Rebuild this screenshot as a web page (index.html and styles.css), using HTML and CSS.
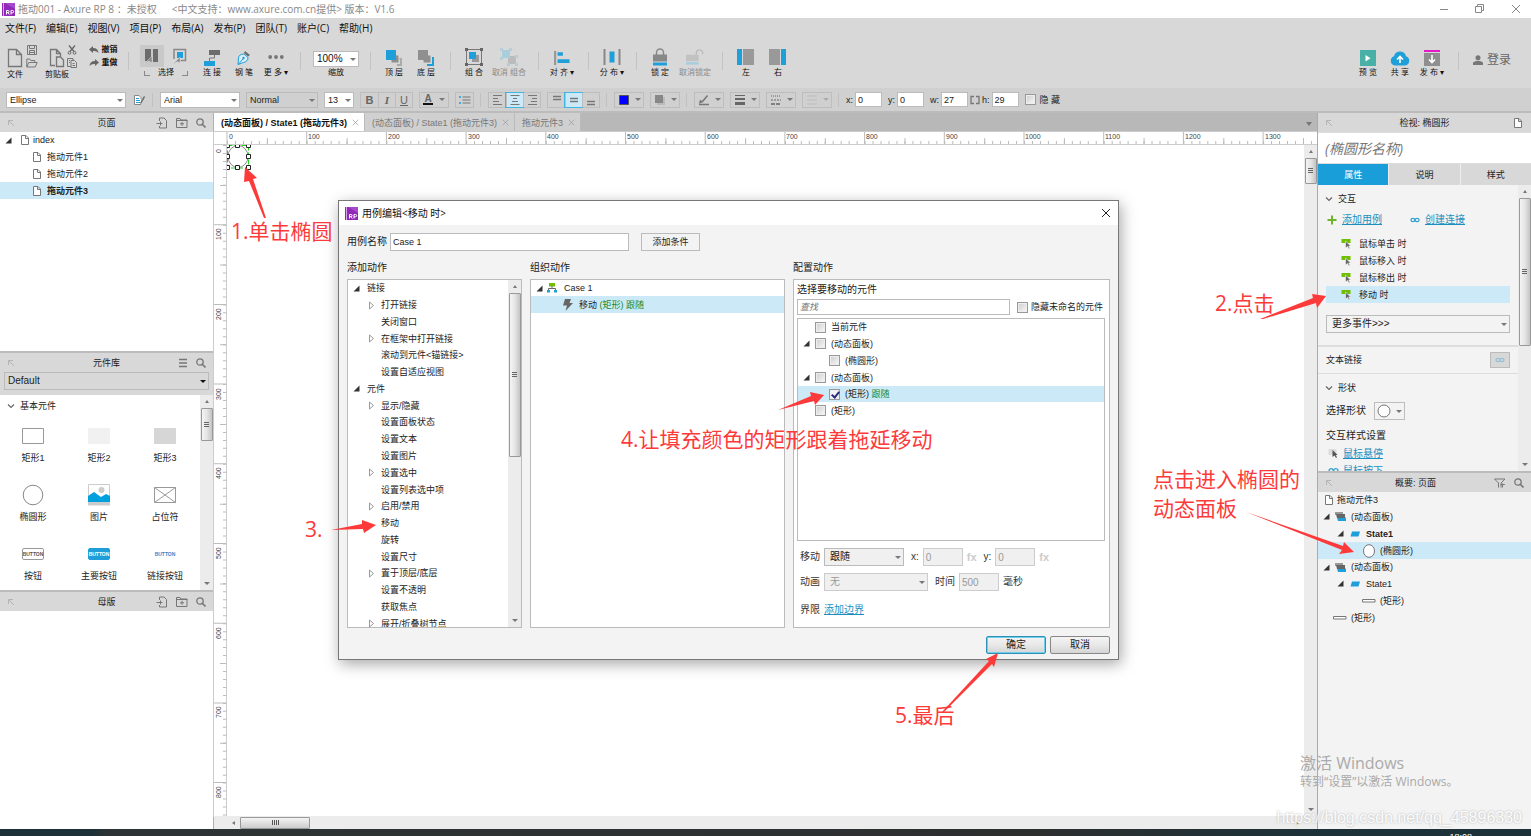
FILE: index.html
```html
<!DOCTYPE html>
<html lang="zh-CN">
<head>
<meta charset="utf-8">
<title>拖动001 - Axure RP 8</title>
<link rel="stylesheet" href="styles.css">
</head>
<body>
<svg class="defs" aria-hidden="true">
  <symbol id="rp" viewBox="0 0 13 13"><rect width="13" height="13" fill="#9228b8"/><rect x="1" width="1" height="13" fill="#d9a6ea"/><path d="M3 0h10v6z" fill="#a548cc"/><path d="M4.500 11.500v-4h1.500a1 1 0 0 1 0 2.200h-1.500m1.500 0l1.300 1.800M9 11.500v-4h1.500a1.100 1.100 0 0 1 0 2.300h-1.500" fill="none" stroke="#fff"/></symbol>
  <symbol id="doc" viewBox="0 0 10 12"><path d="M1.500 1.500h4.500l2.500 2.500v6.500h-7zM5.500 1.500v3h3" fill="#fff" stroke="#777"/></symbol>
  <symbol id="file" viewBox="0 0 16 20"><path d="M1.500 1.500h8l5 5v12h-13zM9.500 1.500v5h5" fill="none" stroke="#777" stroke-width="1.300"/></symbol>
  <symbol id="save" viewBox="0 0 10 10"><path d="M.5.5h9v9h-9zM2.500.5v3h5v-3M2.500 9.500v-4h5v4M3 7.500h4" fill="none" stroke="#777"/></symbol>
  <symbol id="open" viewBox="0 0 12 10"><path d="M.8 9v-8h3l1 1.500h4v2M.8 9l2-4.500h8.400l-2 4.500z" fill="none" stroke="#777"/></symbol>
  <symbol id="paste" viewBox="0 0 16 20"><path d="M6 17.500h-4.500v-16h6l4 4v3M7.500 1.500v4h4M7.500 9h4l3 3v6.500h-7z" fill="none" stroke="#777" stroke-width="1.300"/></symbol>
  <symbol id="cut" viewBox="0 0 10 10"><path d="M2 .5l5 6M8 .5l-5 6" stroke="#666" stroke-width="1.300"/><circle cx="2.500" cy="7.800" r="1.400" fill="none" stroke="#666"/><circle cx="7.500" cy="7.800" r="1.400" fill="none" stroke="#666"/></symbol>
  <symbol id="copy" viewBox="0 0 10 10"><path d="M4 8.500h-3.500v-8h5.500v2M4 2.500h3.500l2 2v5h-5.500zM5.500 5.500h2M5.500 7.500h2.500M2 2.500h1M2 4.500h1" fill="none" stroke="#777"/></symbol>
  <symbol id="undo" viewBox="0 0 10 8"><path d="M0 3.500l4-3.500v2q5 0 5.500 5-2-2.500-5.500-2v2z" fill="#666"/></symbol>
  <symbol id="redo" viewBox="0 0 10 8"><path d="M10 3.500l-4-3.500v2q-5 0-5.500 5 2-2.500 5.500-2v2z" fill="#666"/></symbol>
  <symbol id="selA" viewBox="0 0 16 16"><path d="M1 1h6v10l-2 2h-4zM9 1h5v13h-5z" fill="#6c6c6c"/><path d="M0 16l8-8v7l-3-2z" fill="#888" stroke="#ddd" stroke-width=".5"/></symbol>
  <symbol id="selB" viewBox="0 0 16 16"><path d="M2 11v-9.500h11.500v11h-5" fill="none" stroke="#888" stroke-width="1.500"/><rect x="5" y="4" width="6" height="6" fill="#1e9fda"/><path d="M1 16l7-7v6l-2.500-1.500z" fill="#888" stroke="#ddd" stroke-width=".5"/></symbol>
  <symbol id="connect" viewBox="0 0 16 16"><path d="M5 0h11v5h-11z" fill="#6c6c6c"/><path d="M0 11h11v5h-11z" fill="#1e9fda"/><path d="M10.500 5v3h-5v3" fill="none" stroke="#777"/></symbol>
  <symbol id="pen" viewBox="0 0 14 16"><path d="M8 1l5 4-2 1.500-4-3.500z" fill="#6c6c6c"/><path d="M7 4q-5 0-5.500 4l-.5 6.500 5.500-2q4.500-1 4.500-5z" fill="#d9edf6" stroke="#1e9fda"/><path d="M1.500 14l4.500-5" stroke="#1e9fda"/><circle cx="6.500" cy="8" r="1.200" fill="#1e9fda"/></symbol>
  <symbol id="dots" viewBox="0 0 16 16"><circle cx="2.200" cy="7" r="1.900" fill="#777"/><circle cx="8" cy="7" r="1.900" fill="#777"/><circle cx="13.800" cy="7" r="1.900" fill="#777"/></symbol>
  <symbol id="front" viewBox="0 0 16 16"><path d="M8 8h8v8h-5v-2h3v-4z" fill="#aaa"/><path d="M5 5h8v8h-8z" fill="#8f8f8f" stroke="#d8d8d8"/><path d="M0 0h10v10h-10z" fill="#1e9fda"/></symbol>
  <symbol id="back" viewBox="0 0 16 16"><path d="M9 14v2h7v-9h-2v7z" fill="#1e9fda"/><path d="M5 5h8v8h-8z" fill="#8f8f8f" stroke="#d8d8d8"/><path d="M0 0h10v10h-10z" fill="#8f8f8f"/></symbol>
  <symbol id="group" viewBox="0 0 18 18"><rect x="7" y="7" width="7" height="7" fill="#999"/><rect x="4" y="4" width="7" height="7" fill="#1e9fda"/><rect x="1.500" y="1.500" width="15" height="15" fill="none" stroke="#777"/><path d="M0 0h3v3h-3zM15 0h3v3h-3zM0 15h3v3h-3zM15 15h3v3h-3z" fill="#666"/></symbol>
  <symbol id="ungroup" viewBox="0 0 18 18"><path d="M8 8h8v8h-8z" fill="#bbb"/><path d="M2 2h8v8h-8z" fill="#a8cede"/><path d="M0 0h3v3h-3zM9 0h3v3h-3zM0 9h3v3h-3zM7 15h3v3h-3zM15 7h3v3h-3zM15 15h3v3h-3z" fill="#b6ccd6"/></symbol>
  <symbol id="alignL" viewBox="0 0 18 16"><path d="M0 0h2.500v16h-2.500z" fill="#999"/><path d="M4 1.500h6v4h-6zM4 9.500h13.500v4h-13.500z" fill="#1e9fda"/></symbol>
  <symbol id="distrib" viewBox="0 0 18 16"><path d="M.5 0h2v16h-2zM15.500 0h2v16h-2z" fill="#888"/><path d="M6.500 2.500h5v11h-5z" fill="#1e9fda"/></symbol>
  <symbol id="lock" viewBox="0 0 16 18"><path d="M4.500 7v-2.500a3.500 3.500 0 0 1 7 0v2.500" fill="none" stroke="#888" stroke-width="1.500"/><path d="M1 6.500h14v7h-14z" fill="#888"/><path d="M1 14.500h14v3h-14z" fill="#1e9fda"/></symbol>
  <symbol id="unlock" viewBox="0 0 20 18"><path d="M11.500 7v-2.500a3.500 3.500 0 0 1 7 0v1.500" fill="none" stroke="#bbb" stroke-width="1.500"/><path d="M0 6.500h14v7h-14z" fill="#c2c2c2"/><path d="M0 14.500h14v3h-14z" fill="#a8cede"/></symbol>
  <symbol id="paneL" viewBox="0 0 18 16"><path d="M0 0h5v16h-5z" fill="#1e9fda"/><path d="M6 0h11v16h-11z" fill="#999"/></symbol>
  <symbol id="paneR" viewBox="0 0 18 16"><path d="M12 0h5v16h-5z" fill="#1e9fda"/><path d="M0 0h11v16h-11z" fill="#999"/></symbol>
  <symbol id="preview" viewBox="0 0 16 16"><path d="M0 0h16v16h-16z" fill="#48b0a6"/><path d="M5.500 5l5 3.200-5 3.200z" fill="#fff"/></symbol>
  <symbol id="cloud" viewBox="0 0 20 16"><path d="M5 15.500a4.800 4.800 0 0 1-1-9.300 6.200 6.200 0 0 1 12 0 4.800 4.800 0 0 1-1 9.300z" fill="#1e9fda"/><path d="M10 13v-6M7 9.500l3-3 3 3" fill="none" stroke="#fff" stroke-width="1.600"/></symbol>
  <symbol id="publish" viewBox="0 0 16 16"><path d="M0 0h16v2h-16z" fill="#e619c8"/><path d="M0 3h16v13h-16z" fill="#8f8f8f"/><path d="M8 5v7M5 9.500l3 3 3-3" fill="none" stroke="#fff" stroke-width="1.600"/></symbol>
  <symbol id="user" viewBox="0 0 10 10"><circle cx="5" cy="2.800" r="2.500" fill="#777"/><path d="M0 10v-2.500q2-1.700 5-1.700t5 1.700v2.500z" fill="#777"/></symbol>
  <symbol id="search" viewBox="0 0 10 10"><circle cx="4" cy="4" r="3.200" fill="none" stroke="#777" stroke-width="1.300"/><path d="M6.500 6.500l3 3" stroke="#777" stroke-width="1.600"/></symbol>
  <symbol id="addPage" viewBox="0 0 11 12"><path d="M3 4v-3h4.500l2.500 2.500v7.500h-7v-2M0 6.500h6M4 4.500v4" fill="none" stroke="#777"/></symbol>
  <symbol id="addDir" viewBox="0 0 12 12"><path d="M.5 10.500v-9h3.500l1 1.500h6v7.500zM.5 3.500h11M4 6.800h4M6 4.800v4" fill="none" stroke="#777"/></symbol>
  <symbol id="burger" viewBox="0 0 10 10"><path d="M1 1.500h8M1 5h8M1 8.500h8" stroke="#777" stroke-width="1.300"/></symbol>
  <symbol id="pin" viewBox="0 0 8 8"><path d="M1.500 6v-4.500h4.500M2 2l5 5" fill="none" stroke="#b4b4b4"/></symbol>
  <symbol id="filter" viewBox="0 0 12 10"><path d="M.5 1h10.500l-4 4v4.500M4.500 9.500v-4.500l-4-4M8.500 5.500v4M6.800 6.500h4" fill="none" stroke="#777"/></symbol>
  <symbol id="chev" viewBox="0 0 8 8"><path d="M1 2.500l3 3 3-3" fill="none" stroke="#666" stroke-width="1.200"/></symbol>
  <symbol id="tri" viewBox="0 0 7 7"><path d="M6.500.5v6h-6z" fill="#333"/></symbol>
  <symbol id="triR" viewBox="0 0 7 9"><path d="M1.500 1l4 3.500-4 3.500z" fill="#fff" stroke="#999"/></symbol>
  <symbol id="event" viewBox="0 0 10 11"><path d="M0 1h9v4h-9z" fill="#6fbf00"/><path d="M4 3v7l2-1.500 1.500 2.500 1-.7-1.300-2.300h2z" fill="#666" stroke="#f3f3f3" stroke-width=".6"/></symbol>
  <symbol id="hover" viewBox="0 0 10 11"><path d="M0 1h8v6h-8z" fill="#ddd"/><path d="M4 2v7l2-1.500 1.500 2.500 1-.7-1.300-2.300h2z" fill="#555"/></symbol>
  <symbol id="plus" viewBox="0 0 10 10"><path d="M5 .5v9M.5 5h9" stroke="#6fb52a" stroke-width="2"/></symbol>
  <symbol id="chain" viewBox="0 0 10 6"><path d="M4.800 3a1.900 1.700 0 1 0-3.800 0 1.900 1.700 0 0 0 3.800 0zM9 3a1.900 1.700 0 1 0-3.800 0 1.900 1.700 0 0 0 3.800 0z" fill="none" stroke="#38a3cf" stroke-width="1.300"/></symbol>
  <symbol id="case" viewBox="0 0 10 10"><path d="M2 0h6v3.500h-6z" fill="#6fbf00"/><path d="M5 3v3M1.500 8v-2.500h7v2.500" fill="none" stroke="#666"/><path d="M0 7h3v2.500h-3zM7 7h3v2.500h-3z" fill="#1e9fda"/></symbol>
  <symbol id="bolt" viewBox="0 0 10 12"><path d="M2 0h6l-1.500 4h3.500l-7.500 8 1.500-5.500h-4z" fill="#666"/></symbol>
  <symbol id="panel" viewBox="0 0 11 10"><path d="M0 .5h8v3h-8z" fill="#999"/><path d="M2 6h9v3.500h-8z" fill="#1e9fda"/><path d="M1 2.500h9v4h-8z" fill="#666"/></symbol>
  <symbol id="state" viewBox="0 0 10 6"><path d="M2 .5h8l-1.500 5h-8z" fill="#1e9fda"/></symbol>
  <symbol id="bar" viewBox="0 0 14 4"><path d="M.5.5h12.500v2.500h-12.500z" fill="#fff" stroke="#777"/></symbol>
  <symbol id="close" viewBox="0 0 10 10"><path d="M1 1l8 8M9 1l-8 8" stroke="currentColor" fill="none"/></symbol>
</svg>

<header class="titlebar">
  <svg class="i13"><use href="#rp"/></svg>
  <h1>拖动001 - Axure RP 8 ：未授权</h1>
  <span class="edition">&lt;中文支持：www.axure.com.cn提供&gt; 版本：V1.6</span>
  <div class="winbtns">
    <button aria-label="最小化"><svg class="i10"><path d="M1 5.500h8" stroke="#888"/></svg></button>
    <button aria-label="还原"><svg class="i10"><path d="M.5 2.500h6v6h-6zM2.500 2v-1.500h6v6h-2" fill="none" stroke="#888"/></svg></button>
    <button aria-label="关闭"><svg class="i10"><use href="#close"/></svg></button>
  </div>
</header>

<nav class="menubar">
  <button>文件(F)</button><button>编辑(E)</button><button>视图(V)</button><button>项目(P)</button><button>布局(A)</button><button>发布(P)</button><button>团队(T)</button><button>账户(C)</button><button>帮助(H)</button>
</nav>

<div class="toolbar">
  <div class="cluster">
    <button class="tool narrow"><svg class="i20"><use href="#file"/></svg>文件</button>
    <div class="stack"><button aria-label="保存"><svg class="i10"><use href="#save"/></svg></button><button aria-label="打开"><svg class="i12"><use href="#open"/></svg></button></div>
  </div>
  <div class="cluster">
    <button class="tool narrow clip"><svg class="i20"><use href="#paste"/></svg>剪贴板</button>
    <div class="stack"><button aria-label="剪切"><svg class="i10"><use href="#cut"/></svg></button><button aria-label="复制"><svg class="i10"><use href="#copy"/></svg></button></div>
  </div>
  <div class="stack history"><button><svg class="i10"><use href="#undo"/></svg>撤销</button><button><svg class="i10"><use href="#redo"/></svg>重做</button></div>
  <span class="sep wide"></span>
  <div class="selmode">
    <div class="modes"><button class="on" aria-label="相交选择"><svg class="i16"><use href="#selA"/></svg></button><button aria-label="包含选择"><svg class="i16"><use href="#selB"/></svg></button></div>
    <div class="modelabel"><i class="lb"></i>选择<i class="rb"></i></div>
  </div>
  <button class="tool"><svg class="i16"><use href="#connect"/></svg>连 接</button>
  <button class="tool"><svg class="i16"><use href="#pen"/></svg>钢 笔</button>
  <button class="tool"><svg class="i16"><use href="#dots"/></svg>更 多 ▾</button>
  <span class="sep"></span>
  <div class="zoom"><span class="pick"><select id="zoom" class="white big"><option>100%</option></select></span><label for="zoom">缩放</label></div>
  <span class="sep wide"></span>
  <button class="tool"><svg class="i16"><use href="#front"/></svg>顶 层</button>
  <button class="tool"><svg class="i16"><use href="#back"/></svg>底 层</button>
  <span class="sep"></span>
  <button class="tool"><svg class="i18"><use href="#group"/></svg>组 合</button>
  <button class="tool off broad"><svg class="i18"><use href="#ungroup"/></svg>取消 组合</button>
  <span class="sep wide"></span>
  <button class="tool"><svg class="i16"><use href="#alignL"/></svg>对 齐 ▾</button>
  <span class="sep wide"></span>
  <button class="tool"><svg class="i18"><use href="#distrib"/></svg>分 布 ▾</button>
  <span class="sep"></span>
  <button class="tool"><svg class="i18"><use href="#lock"/></svg>锁 定</button>
  <button class="tool off broad"><svg class="i18"><use href="#unlock"/></svg>取消锁定</button>
  <span class="sep"></span>
  <button class="tool"><svg class="i18"><use href="#paneL"/></svg>左</button>
  <button class="tool"><svg class="i18"><use href="#paneR"/></svg>右</button>
  <div class="share">
    <button class="tool"><svg class="i16"><use href="#preview"/></svg>预 览</button>
    <button class="tool"><svg class="i20 flat"><use href="#cloud"/></svg>共 享</button>
    <button class="tool"><svg class="i16"><use href="#publish"/></svg>发 布 ▾</button>
    <span class="sep wide"></span>
    <button class="login"><svg class="i10"><use href="#user"/></svg>登录</button>
  </div>
</div>

<div class="format">
  <span class="pick w120"><select class="white" aria-label="部件样式"><option>Ellipse</option></select></span>
  <button class="edit" aria-label="编辑样式"><svg class="i12" viewBox="0 0 12 12"><path d="M8 10.500h-6.500v-9h4.500l2 2v2" fill="#fff" stroke="#888"/><path d="M3 4.500h3M3 6.500h4M3 8.500h4" stroke="#1e9fda"/><path d="M11.500 2.500l-4 7" stroke="#666" stroke-width="1.500"/></svg></button>
  <span class="sep"></span>
  <span class="pick w80"><select class="white" aria-label="字体"><option>Arial</option></select></span>
  <span class="pick w72"><select aria-label="字重"><option>Normal</option></select></span>
  <span class="pick w30"><select class="white" aria-label="字号"><option>13</option></select></span>
  <div class="seg"><button><b>B</b></button><button><i class="serif">I</i></button><button><u>U</u></button></div>
  <button class="drop"><b class="fc">A</b></button>
  <div class="seg"><button aria-label="项目符号"><svg class="i12" viewBox="0 0 12 12"><path d="M3.500 3h8M3.500 6h8M3.500 9h8" stroke="#777"/><path d="M0 3h2M0 9h2" stroke="#1e9fda" stroke-width="1.500"/></svg></button></div>
  <span class="sep"></span>
  <div class="seg">
    <button aria-label="左对齐"><svg class="i12" viewBox="0 0 12 12"><path d="M1 1.500h9M1 4.500h5M1 7.500h6M1 10.500h9" stroke="#777" stroke-width="1.200"/></svg></button>
    <button class="on" aria-label="居中"><svg class="i12" viewBox="0 0 12 12"><path d="M1.500 1.500h9M4 4.500h4M3 7.500h6M1.500 10.500h9" stroke="#777" stroke-width="1.200"/></svg></button>
    <button aria-label="右对齐"><svg class="i12" viewBox="0 0 12 12"><path d="M2 1.500h9M6 4.500h5M5 7.500h6M2 10.500h9" stroke="#777" stroke-width="1.200"/></svg></button>
  </div>
  <div class="seg">
    <button aria-label="顶部对齐"><svg class="i12" viewBox="0 0 12 12"><path d="M2 2.500h8M2 5.500h8" stroke="#777" stroke-width="1.300"/></svg></button>
    <button class="on" aria-label="中部对齐"><svg class="i12" viewBox="0 0 12 12"><path d="M2 4.500h8M2 7.500h8" stroke="#777" stroke-width="1.300"/></svg></button>
    <button aria-label="底部对齐"><svg class="i12" viewBox="0 0 12 12"><path d="M2 7.500h8M2 10.500h8" stroke="#777" stroke-width="1.300"/></svg></button>
  </div>
  <span class="sep"></span>
  <button class="drop" aria-label="填充颜色"><svg class="i12" viewBox="0 0 12 12"><path d="M1.500 1.500h9v9h-9z" fill="#00f" stroke="#555"/></svg></button>
  <button class="drop" aria-label="阴影"><svg class="i12" viewBox="0 0 12 12"><path d="M3 3h8v8h-8z" fill="#bbb"/><path d="M1 1h8v8h-8z" fill="#888"/></svg></button>
  <span class="sep"></span>
  <button class="drop" aria-label="线条颜色"><svg class="i12" viewBox="0 0 12 12"><path d="M1 10.500h10" stroke="#777" stroke-width="1.500"/><path d="M9.500 1.500l-5 6-2.500 1 .8-2.500" fill="none" stroke="#777" stroke-width="1.500"/></svg></button>
  <button class="drop" aria-label="线宽"><svg class="i12" viewBox="0 0 12 12"><path d="M1 1.500h10" stroke="#666"/><path d="M1 5h10" stroke="#666" stroke-width="2"/><path d="M1 9.500h10" stroke="#666" stroke-width="3"/></svg></button>
  <button class="drop" aria-label="线型"><svg class="i12" viewBox="0 0 12 12"><path d="M1 2h10" stroke="#666" stroke-dasharray="1 1"/><path d="M1 6h10" stroke="#666" stroke-dasharray="2 1"/><path d="M1 10h10" stroke="#666" stroke-dasharray="4 1" stroke-width="1.500"/></svg></button>
  <button class="drop dim" aria-label="箭头" disabled><svg class="i12" viewBox="0 0 12 12"><path d="M1 2h10M1 6h10M1 10h10" stroke="#bbb"/></svg></button>
  <span class="sep"></span>
  <label class="coord">x:<input type="text" value="0"></label>
  <label class="coord">y:<input type="text" value="0"></label>
  <label class="coord">w:<input type="text" value="27"></label>
  <label class="coord tied"><svg class="i10" viewBox="0 0 10 10"><path d="M4 1.500h-3v7h3M6 1.500h3v7h-3" fill="none" stroke="#777" stroke-width="1.300"/></svg>h:<input type="text" value="29"></label>
  <label class="check"><input type="checkbox">隐 藏</label>
</div>

<main class="work">
  <aside class="left">
    <section class="pages">
      <header class="phead"><svg class="i8"><use href="#pin"/></svg><h2>页面</h2><button aria-label="新增页面"><svg class="i12"><use href="#addPage"/></svg></button><button aria-label="新增文件夹"><svg class="i12"><use href="#addDir"/></svg></button><button aria-label="搜索"><svg class="i10"><use href="#search"/></svg></button></header>
      <ul class="tree">
        <li><svg class="i7"><use href="#tri"/></svg><svg class="i12"><use href="#doc"/></svg>index</li>
        <li class="sub"><svg class="i12"><use href="#doc"/></svg>拖动元件1</li>
        <li class="sub"><svg class="i12"><use href="#doc"/></svg>拖动元件2</li>
        <li class="sub sel"><svg class="i12"><use href="#doc"/></svg><b>拖动元件3</b></li>
      </ul>
    </section>
    <section class="library">
      <header class="phead"><svg class="i8"><use href="#pin"/></svg><h2>元件库</h2><button aria-label="菜单"><svg class="i10"><use href="#burger"/></svg></button><button aria-label="搜索"><svg class="i10"><use href="#search"/></svg></button></header>
      <div class="libpick"><span class="pick dark"><select class="big" aria-label="元件库"><option>Default</option></select></span></div>
      <div class="libbody">
        <div class="libmain">
          <h3><svg class="i8"><use href="#chev"/></svg>基本元件</h3>
          <div class="widgets">
            <figure><svg class="i24" viewBox="0 0 24 24"><path d="M1.500 4.500h21v15h-21z" fill="#fff" stroke="#999"/></svg><figcaption>矩形1</figcaption></figure>
            <figure><svg class="i24" viewBox="0 0 24 24"><path d="M1 4h22v16h-22z" fill="#f1f1f1"/></svg><figcaption>矩形2</figcaption></figure>
            <figure><svg class="i24" viewBox="0 0 24 24"><path d="M1 4h22v16h-22z" fill="#d6d6d6"/></svg><figcaption>矩形3</figcaption></figure>
            <figure><svg class="i24" viewBox="0 0 24 24"><circle cx="12" cy="12" r="9.800" fill="#fff" stroke="#888"/></svg><figcaption>椭圆形</figcaption></figure>
            <figure><svg class="i24" viewBox="0 0 24 24"><path d="M1.500 1.500h21v20h-21z" fill="#fff" stroke="#ccc"/><circle cx="14.500" cy="7" r="3" fill="#ccc"/><path d="M1 19v-6l6-4 7 5 5-3 4 2v6z" fill="#00a0df"/><path d="M1 19h22v3.500h-22z" fill="#ccc"/></svg><figcaption>图片</figcaption></figure>
            <figure><svg class="i24" viewBox="0 0 24 24"><path d="M1.500 4.500h21v15h-21zl21 15M22.500 4.500l-21 15" fill="#fff" stroke="#999"/></svg><figcaption>占位符</figcaption></figure>
            <figure><span class="wbtn">BUTTON</span><figcaption>按钮</figcaption></figure>
            <figure><span class="wbtn primary">BUTTON</span><figcaption>主要按钮</figcaption></figure>
            <figure><span class="wbtn link">BUTTON</span><figcaption>链接按钮</figcaption></figure>
          </div>
        </div>
        <div class="vscroll"><i class="up"></i><i class="thumb short"></i><i class="down"></i></div>
      </div>
    </section>
    <section class="masters">
      <header class="phead"><svg class="i8"><use href="#pin"/></svg><h2>母版</h2><button aria-label="新增母版"><svg class="i12"><use href="#addPage"/></svg></button><button aria-label="新增文件夹"><svg class="i12"><use href="#addDir"/></svg></button><button aria-label="搜索"><svg class="i10"><use href="#search"/></svg></button></header>
    </section>
  </aside>

  <section class="center">
    <div class="tabs">
      <button class="tab on">(动态面板) / State1 (拖动元件3)<svg class="i7" viewBox="0 0 10 10"><use href="#close"/></svg></button>
      <button class="tab">(动态面板) / State1 (拖动元件3)<svg class="i7" viewBox="0 0 10 10"><use href="#close"/></svg></button>
      <button class="tab">拖动元件3<svg class="i7" viewBox="0 0 10 10"><use href="#close"/></svg></button>
      <i class="tabmenu"></i>
    </div>
    <svg class="hruler">
      <g stroke="#bbb"><path d="M13 10.500h2000" stroke-width="3" stroke-dasharray="1 6.970"/><path d="M52.900 9h2000" stroke-width="6" stroke-dasharray="1 78.700"/><path d="M12.500 6h2000" stroke-width="12" stroke-dasharray="1 78.700"/></g>
      <g class="ticks"><text x="15" y="7">0</text><text x="94" y="7">100</text><text x="174" y="7">200</text><text x="254" y="7">300</text><text x="333" y="7">400</text><text x="413" y="7">500</text><text x="493" y="7">600</text><text x="572" y="7">700</text><text x="652" y="7">800</text><text x="732" y="7">900</text><text x="811" y="7">1000</text><text x="891" y="7">1100</text><text x="971" y="7">1200</text><text x="1051" y="7">1300</text></g>
    </svg>
    <div class="stage">
      <svg class="vruler">
        <g stroke="#bbb"><path d="M10.500 0v2000" stroke-width="3" stroke-dasharray="1 6.970"/><path d="M9 39.900v2000" stroke-width="6" stroke-dasharray="1 78.700"/><path d="M6 79.200v2000" stroke-width="12" stroke-dasharray="1 78.700"/></g>
        <g class="ticks"><text transform="translate(7 8) rotate(-90)">0</text><text transform="translate(7 95) rotate(-90)">100</text><text transform="translate(7 175) rotate(-90)">200</text><text transform="translate(7 255) rotate(-90)">300</text><text transform="translate(7 334) rotate(-90)">400</text><text transform="translate(7 414) rotate(-90)">500</text><text transform="translate(7 494) rotate(-90)">600</text><text transform="translate(7 573) rotate(-90)">700</text><text transform="translate(7 653) rotate(-90)">800</text></g>
      </svg>
      <div class="canvas">
        <svg class="shape" viewBox="0 0 24 26"><path d="M.5.500h21v22.500h-21z" fill="none" stroke="#1fd01f" stroke-dasharray="5 2"/><ellipse cx="11" cy="11.500" rx="10" ry="11" fill="#fff" stroke="#888"/><g fill="#fff" stroke="#222"><path d="M-1.500-1.500h4v4h-4zM8.500-1.500h4v4h-4zM19.500-1.500h4v4h-4zM-1.500 9.500h4v4h-4zM19.500 9.500h4v4h-4zM-1.500 20.500h4v4h-4zM8.500 20.500h4v4h-4zM19.500 20.500h4v4h-4z"/></g></svg>
      </div>
      <div class="vscroll"><i class="up"></i><i class="thumb tiny"></i><i class="down"></i></div>
    </div>
    <div class="hscroll"><i class="larr"></i><i class="thumb"></i><i class="rarr"></i></div>
  </section>

  <aside class="right">
    <section class="inspector">
      <header class="phead"><svg class="i8"><use href="#pin"/></svg><h2>检视: 椭圆形</h2><button aria-label="页面属性"><svg class="i12"><use href="#doc"/></svg></button></header>
      <input class="wname" type="text" placeholder="(椭圆形名称)" aria-label="椭圆形名称">
      <div class="itabs"><button class="on">属性</button><button>说明</button><button>样式</button></div>
      <div class="ibody">
        <div class="iscroll">
          <h3><svg class="i8"><use href="#chev"/></svg>交互</h3>
          <div class="ilinks"><svg class="i10"><use href="#plus"/></svg><a href="#">添加用例</a><svg class="i10 gapl"><use href="#chain"/></svg><a href="#">创建连接</a></div>
          <ul class="events">
            <li><svg class="i11"><use href="#event"/></svg>鼠标单击 时</li>
            <li><svg class="i11"><use href="#event"/></svg>鼠标移入 时</li>
            <li><svg class="i11"><use href="#event"/></svg>鼠标移出 时</li>
            <li class="sel"><svg class="i11"><use href="#event"/></svg>移动 时</li>
          </ul>
          <span class="pick more"><select class="mid" aria-label="更多事件"><option>更多事件&gt;&gt;&gt;</option></select></span>
          <div class="textlink">文本链接<button aria-label="文本链接"><svg class="i10"><use href="#chain"/></svg></button></div>
          <h3 class="shapehead"><svg class="i8"><use href="#chev"/></svg>形状</h3>
          <div class="pickshape">选择形状<button class="drop" aria-label="选择形状"><svg class="i14" viewBox="0 0 14 14"><circle cx="7" cy="7" r="6" fill="#fff" stroke="#777"/></svg></button></div>
          <h4>交互样式设置</h4>
          <div class="istyle"><svg class="i11"><use href="#hover"/></svg><a href="#">鼠标悬停</a></div>
          <div class="istyle"><svg class="i11"><use href="#chain"/></svg><a href="#">鼠标按下</a></div>
        </div>
        <div class="vscroll"><i class="up"></i><i class="thumb long"></i><i class="down"></i></div>
      </div>
    </section>
    <section class="outline">
      <header class="phead"><svg class="i8"><use href="#pin"/></svg><h2>概要: 页面</h2><button aria-label="筛选"><svg class="i12"><use href="#filter"/></svg></button><button aria-label="搜索"><svg class="i10"><use href="#search"/></svg></button></header>
      <ul class="tree">
        <li class="root"><svg class="i12"><use href="#doc"/></svg>拖动元件3</li>
        <li><svg class="i7"><use href="#tri"/></svg><svg class="i11"><use href="#panel"/></svg>(动态面板)</li>
        <li class="d1"><svg class="i7"><use href="#tri"/></svg><svg class="i10"><use href="#state"/></svg><b>State1</b></li>
        <li class="d2 sel"><svg class="i14" viewBox="0 0 14 14"><ellipse cx="7" cy="7" rx="5.500" ry="6.300" fill="#fff" stroke="#777"/></svg>(椭圆形)</li>
        <li><svg class="i7"><use href="#tri"/></svg><svg class="i11"><use href="#panel"/></svg>(动态面板)</li>
        <li class="d1"><svg class="i7"><use href="#tri"/></svg><svg class="i10"><use href="#state"/></svg>State1</li>
        <li class="d2"><svg class="i14"><use href="#bar"/></svg>(矩形)</li>
        <li class="d0"><svg class="i14"><use href="#bar"/></svg>(矩形)</li>
      </ul>
    </section>
  </aside>
</main>

<footer class="taskbar"><time>18:08</time></footer>

<div class="dialog" role="dialog" aria-labelledby="dlg">
  <header><svg class="i13"><use href="#rp"/></svg><h2 id="dlg">用例编辑&lt;移动 时&gt;</h2><button aria-label="关闭"><svg class="i10"><use href="#close"/></svg></button></header>
  <div class="caseform"><label for="cname">用例名称</label><input id="cname" type="text" value="Case 1"><button>添加条件</button></div>
  <div class="cols">
    <section>
      <h3>添加动作</h3>
      <div class="box split">
        <ul class="actions">
          <li class="cat"><svg class="i7"><use href="#tri"/></svg>链接</li>
          <li><svg class="i9"><use href="#triR"/></svg>打开链接</li>
          <li class="leaf">关闭窗口</li>
          <li><svg class="i9"><use href="#triR"/></svg>在框架中打开链接</li>
          <li class="leaf">滚动到元件&lt;锚链接&gt;</li>
          <li class="leaf">设置自适应视图</li>
          <li class="cat"><svg class="i7"><use href="#tri"/></svg>元件</li>
          <li><svg class="i9"><use href="#triR"/></svg>显示/隐藏</li>
          <li class="leaf">设置面板状态</li>
          <li class="leaf">设置文本</li>
          <li class="leaf">设置图片</li>
          <li><svg class="i9"><use href="#triR"/></svg>设置选中</li>
          <li class="leaf">设置列表选中项</li>
          <li><svg class="i9"><use href="#triR"/></svg>启用/禁用</li>
          <li class="leaf">移动</li>
          <li class="leaf">旋转</li>
          <li class="leaf">设置尺寸</li>
          <li><svg class="i9"><use href="#triR"/></svg>置于顶层/底层</li>
          <li class="leaf">设置不透明</li>
          <li class="leaf">获取焦点</li>
          <li><svg class="i9"><use href="#triR"/></svg>展开/折叠树节点</li>
        </ul>
        <div class="vscroll"><i class="up"></i><i class="thumb tall"></i><i class="down"></i></div>
      </div>
    </section>
    <section>
      <h3>组织动作</h3>
      <ul class="box tree cases">
        <li><svg class="i7"><use href="#tri"/></svg><svg class="i10"><use href="#case"/></svg>Case 1</li>
        <li class="sub sel"><svg class="i12"><use href="#bolt"/></svg><span>移动 <em>(矩形) 跟随</em></span></li>
      </ul>
    </section>
    <section>
      <h3>配置动作</h3>
      <div class="box config">
        <h4>选择要移动的元件</h4>
        <div class="find"><input type="text" placeholder="查找" aria-label="查找"><label class="check"><input type="checkbox">隐藏未命名的元件</label></div>
        <ul class="tree targets">
          <li class="c1"><label class="check"><input type="checkbox">当前元件</label></li>
          <li><svg class="i7"><use href="#tri"/></svg><label class="check"><input type="checkbox">(动态面板)</label></li>
          <li class="c2"><label class="check"><input type="checkbox">(椭圆形)</label></li>
          <li><svg class="i7"><use href="#tri"/></svg><label class="check"><input type="checkbox">(动态面板)</label></li>
          <li class="c2 sel"><label class="check"><input type="checkbox" checked><span>(矩形) <em>跟随</em></span></label></li>
          <li class="c1"><label class="check"><input type="checkbox">(矩形)</label></li>
        </ul>
        <div class="opt"><label for="mv">移动</label><span class="pick w80"><select id="mv" class="mid"><option>跟随</option></select></span><label for="mx" class="ax">x:</label><input id="mx" type="text" value="0" disabled><span class="fx">fx</span><label for="my" class="ax">y:</label><input id="my" type="text" value="0" disabled><span class="fx">fx</span></div>
        <div class="opt"><label for="an">动画</label><span class="pick w104"><select id="an" class="mid" disabled><option>无</option></select></span><label for="tm" class="tm">时间</label><input id="tm" type="text" value="500" disabled>毫秒</div>
        <div class="opt last"><span>界限</span><a href="#">添加边界</a></div>
      </div>
    </section>
  </div>
  <footer><button class="ok">确定</button><button>取消</button></footer>
</div>

<div class="notes">
  <svg><g fill="#fd3a3a"><path d="M245 167l12 11-4 1 13 39h-2l-15-37-5 1z"/><path d="M1326 296l-14-2 1 4-53 21h3l53-16 1 5z"/><path d="M376 525l-14-5v4l-31 6 32-1 1 4z"/><path d="M824 395l-14-3 1 4-33 14 36-9 1 4z"/><path d="M998 653l-12 6 3 2-47 51h2l48-48 2 3z"/><path d="M1354 552l-10-10-1 4-97-34 96 38-3 4z"/></g></svg>
  <p class="n1">1.单击椭圆</p>
  <p class="n2">2.点击</p>
  <p class="n3">3.</p>
  <p class="n4">4.让填充颜色的矩形跟着拖延移动</p>
  <p class="n5">5.最后</p>
  <p class="n6">点击进入椭圆的<br>动态面板</p>
  <p class="act">激活 Windows<small>转到“设置”以激活 Windows。</small></p>
  <p class="csdn">https://blog.csdn.net/qq_45896330</p>
</div>
</body>
</html>
```
FILE: styles.css
```css
* { box-sizing: border-box; margin: 0; padding: 0; }
html, body { height: 100%; }
body {
  display: flex; flex-direction: column; overflow: hidden; position: relative;
  background: #d8d8d8; color: #222;
  font: 9px/12px "Liberation Sans", "Noto Sans CJK SC", sans-serif;
}
h1, h2, h3, h4 { font-size: inherit; font-weight: normal; }
ul { list-style: none; }
button, input, select { font: inherit; color: inherit; border: 0; background: none; border-radius: 0; }
button { cursor: pointer; display: inline-flex; align-items: center; justify-content: center; white-space: nowrap; }
a { color: #1c8fc0; font-size: 10px; }
em { font-style: normal; color: #1a8a2a; }
svg { flex: none; overflow: visible; display: block; }
.defs { width: 0; height: 0; position: absolute; }
.i7 { width: 7px; height: 7px; }
.i8 { width: 8px; height: 8px; }
.i9 { width: 7px; height: 9px; }
.i10 { width: 10px; height: 10px; }
.i11 { width: 11px; height: 11px; }
.i12 { width: 12px; height: 12px; }
.i13 { width: 13px; height: 13px; }
.i14 { width: 14px; height: 14px; }
.i16 { width: 16px; height: 16px; }
.i18 { width: 18px; height: 18px; }
.i20 { width: 20px; height: 20px; }
.i24 { width: 24px; height: 24px; }

/* window chrome */
.titlebar { height: 18px; flex: none; display: flex; align-items: center; background: #fff; padding: 0 10px 0 2px; color: #888; font: 10px/18px "Open Sans", "Noto Sans CJK SC", sans-serif; white-space: nowrap; }
.titlebar h1 { margin-left: 3px; }
.edition { margin-left: 15px; }
.winbtns { margin-left: auto; display: flex; gap: 26px; }
.menubar { height: 20px; flex: none; display: flex; align-items: center; gap: 10px; padding-left: 5px; font: 10px/14px "Open Sans", "Noto Sans CJK SC", sans-serif; color: #111; }

/* toolbar */
.toolbar { height: 50px; flex: none; display: flex; align-items: flex-start; padding: 7px 4px 0; font-size: 8px; line-height: 10px; color: #111; }
.cluster { display: flex; margin-right: 10px; }
.tool { width: 32px; height: 33px; flex-direction: column; justify-content: flex-end; flex: none; }
.tool svg { margin-bottom: 2px; }
.tool .flat { height: 16px; }
.tool.narrow { width: 22px; height: 35px; }
.tool.clip { width: 18px; }
.tool.broad { width: 38px; }
.off { color: #888; }
.stack { display: flex; flex-direction: column; gap: 3px; }
.stack button { height: 10px; width: 12px; }
.history button { width: 30px; gap: 3px; font-weight: bold; }
.sep { width: 1px; height: 18px; background: #c2c2c2; margin: 7px 7px 0 8px; flex: none; }
.sep.wide { margin-left: 10px; }
.selmode { width: 60px; padding-left: 4px; }
.modes { display: flex; gap: 4px; }
.modes button { width: 24px; height: 22px; }
.modes .on { background: #c9c9c9; }
.modelabel { display: flex; justify-content: space-between; align-items: center; margin-top: 1px; width: 44px; margin-left: 4px; }
.modelabel i { width: 6px; height: 5px; border-bottom: 1px solid #888; }
.lb { border-left: 1px solid #888; }
.rb { border-right: 1px solid #888; }
.zoom { width: 46px; text-align: center; padding-top: 6px; margin: 0 1px 0 5px; }
.zoom .pick { height: 16px; margin-bottom: 1px; }
.zoom label { display: block; }
.share { margin-left: auto; display: flex; align-items: flex-start; padding-right: 16px; }
.login { gap: 4px; margin: 8px 0 0 7px; font-size: 12px; line-height: 14px; height: 14px; color: #666; }

/* drop-downs */
.pick { position: relative; display: flex; height: 16px; flex: none; }
.pick select { appearance: none; width: 100%; height: 100%; border: 1px solid #bbb; padding: 0 3px; line-height: 12px; }
.pick::after, .drop::after, .tabmenu::after { content: ""; border: 3px solid transparent; border-top-color: #777; border-bottom: 0; }
.pick::after { position: absolute; right: 3px; top: 50%; margin-top: -1px; pointer-events: none; }
.pick.dark::after { border-top-color: #111; }
.white { background: #fff; }
.pick .big, .pick .mid { font-size: 10px; }
.w120 { width: 120px; } .w80 { width: 80px; } .w72 { width: 72px; } .w30 { width: 30px; } .w104 { width: 104px; }

/* format bar */
.format { height: 25px; flex: none; display: flex; align-items: center; gap: 6px; padding: 0 6px; background: #d0d0d0; border-bottom: 2px solid #bcbcbc; }
.format .sep { margin: 0 1px 0 0; height: 14px; }
.edit { margin: 0 1px; }
.seg { display: flex; border: 1px solid #bdbdbd; height: 16px; }
.seg button { width: 17px; height: 14px; color: #666; font-size: 11px; }
.seg button + button { border-left: 1px solid #bdbdbd; }
.seg .on { background: #cbe9f7; outline: 1px solid #45b4e0; }
.serif { font-family: "Liberation Serif", serif; font-weight: bold; }
.drop { width: 30px; height: 16px; border: 1px solid #bdbdbd; justify-content: space-around; }
.drop.dim::after { border-top-color: #aaa; }
.fc { border-bottom: 2px solid #111; line-height: 9px; color: #666; width: 10px; font-size: 10px; }
.coord { display: flex; align-items: center; gap: 2px; }
.coord input { width: 27px; height: 15px; border: 1px solid #bbb; background: #fff; padding: 0 2px; }
.tied { margin-left: -4px; }
.check { display: flex; align-items: center; gap: 4px; white-space: nowrap; }
.check input { appearance: none; width: 11px; height: 11px; border: 1px solid #999; background: linear-gradient(135deg, #ccc, #fafafa); outline: 1px solid #eee; outline-offset: -2px; flex: none; }
.check input:checked { background: #f4f4f4; }
.check input:checked::before { content: ""; display: block; width: 3px; height: 6px; margin: 0 0 0 3px; border: solid #2b2b80; border-width: 0 2px 2px 0; transform: rotate(40deg); }

/* main work area */
.work { flex: 1; min-height: 0; display: grid; grid-template-columns: 214px minmax(0, 1fr) 214px; }
.left { display: flex; flex-direction: column; border-right: 1px solid #b0b0b0; min-height: 0; background: #fff; }
.phead { height: 19px; display: flex; align-items: center; gap: 8px; background: #d8d8d8; padding: 0 7px; flex: none; }
.phead h2 { flex: 1; text-align: center; }
.left .phead h2 { padding-left: 42px; }
.left .library .phead h2 { padding-left: 20px; }
.right .phead h2 { padding-left: 4px; }
.phead button { height: 12px; }
.pages { height: 238px; }
.tree li { height: 17px; display: flex; align-items: center; gap: 7px; padding-left: 5px; white-space: nowrap; }
.tree li:nth-child(4n+1) { height: 16px; }
.tree .sel, .events .sel { background: #cbe9f7; }
.pages .sub { padding-left: 31px; gap: 4px; }
.pages li svg + svg { margin-right: -5px; }
.library { border-top: 2px solid #bcbcbc; height: 239px; display: flex; flex-direction: column; }
.libpick { background: #d8d8d8; padding: 0 4px 5px; }
.pick.dark { height: 18px; }
.libbody { flex: 1; display: flex; min-height: 0; }
.libmain { flex: 1; }
.libmain h3 { display: flex; gap: 5px; align-items: center; height: 21px; padding-left: 7px; }
.widgets { display: grid; grid-template-columns: repeat(3, 66px); grid-auto-rows: 59px; }
.widgets figure { display: flex; flex-direction: column; align-items: center; padding-top: 8px; gap: 4px; }
.wbtn { width: 22px; height: 12px; margin: 6px 0; border: 1px solid #999; border-radius: 2px; font-size: 5px; line-height: 10px; font-weight: bold; text-align: center; color: #555; display: flex; justify-content: center; }
.primary { background: #1e9fda; border-color: #1e9fda; color: #fff; }
.link { border-color: transparent; color: #3a85c8; }
.masters { border-top: 2px solid #bcbcbc; flex: 1; }

/* scroll bars */
.vscroll { width: 13px; background: #ececec; display: flex; flex-direction: column; align-items: center; flex: none; padding: 5px 0; }
.vscroll .up { border: 2px solid transparent; border-bottom: 3px solid #777; border-top: 0; margin-bottom: 5px; }
.vscroll .down { border: 3px solid transparent; border-top: 3px solid #777; border-bottom: 0; margin-top: auto; }
.thumb { border: 1px solid #999; border-radius: 1px; display: flex; align-items: center; justify-content: center; background: linear-gradient(90deg, #f4f4f4, #e4e4e4 50%, #c4c4c4); }
.vscroll .thumb { width: 12px; }
.thumb::after { content: ""; width: 5px; height: 6px; background: repeating-linear-gradient(#666 0 1px, transparent 1px 2px); }
.short { height: 33px; } .tiny { height: 26px; } .long { height: 148px; } .tall { height: 164px; }
.hscroll { height: 13px; flex: none; display: flex; align-items: center; background: #ececec; padding: 0 18px; }
.hscroll .thumb { width: 70px; height: 12px; background: linear-gradient(#f4f4f4, #ccc); }
.hscroll .thumb::after { width: 7px; height: 5px; background: repeating-linear-gradient(90deg, #555 0 1px, transparent 1px 2px); }
.larr { border: 2px solid transparent; border-right: 3px solid #777; border-left: 0; margin-right: 5px; }
.rarr { border: 2px solid transparent; border-left: 3px solid #777; border-right: 0; margin-left: auto; }

/* canvas */
.center { display: flex; flex-direction: column; min-height: 0; min-width: 0; background: #fff; }
.tabs { height: 19px; flex: none; display: flex; background: #b8b8b8; }
.tab { padding: 0 5px 0 7px; gap: 5px; background: #d0d0d0; color: #777; border-right: 1px solid #bbb; }
.tab svg { color: #999; }
.tab.on { background: #fff; color: #111; font-weight: bold; }
.tabmenu { margin-left: auto; padding: 9px 5px 0; }
.tabmenu::after { display: block; border-top-width: 4px; }
.hruler { width: 100%; height: 12px; flex: none; overflow: hidden; outline: 1px solid #ccc; margin-bottom: 1px; }
.ticks { font-size: 7px; fill: #444; }
.stage { flex: 1; min-height: 0; display: flex; }
.vruler { width: 12px; height: 100%; overflow: hidden; outline: 1px solid #ccc; margin-right: 1px; }
.canvas { flex: 1; overflow: hidden; }
.shape { width: 24px; height: 26px; overflow: hidden; }

/* inspector */
.right { display: flex; flex-direction: column; border-left: 1px solid #aaa; background: #f3f3f3; min-height: 0; }
.inspector { height: 358px; display: flex; flex-direction: column; }
.wname { height: 31px; background: #fff; padding: 0 7px; flex: none; font: italic 14px/20px "Open Sans", "Noto Sans CJK SC", sans-serif; border-top: 1px solid #ddd; }
.wname::placeholder { color: #777; }
.itabs { display: grid; grid-template-columns: repeat(3, 1fr); gap: 1px; height: 22px; flex: none; background: #eee; border-top: 1px solid #ddd; }
.itabs button { background: #d8d8d8; }
.itabs .on { background: #1a9ed9; color: #fff; }
.ibody { flex: 1; min-height: 0; display: flex; overflow: hidden; }
.iscroll { flex: 1; padding: 6px 8px 0; overflow: hidden; }
.iscroll h3 { display: flex; gap: 5px; align-items: center; height: 16px; margin-left: -1px; }
.ilinks { display: flex; align-items: center; gap: 5px; height: 26px; padding-left: 1px; }
.gapl { margin-left: 23px; height: 6px; }
.events { margin: 2px 0 12px; }
.events li { height: 17px; display: flex; align-items: center; gap: 7px; padding-left: 15px; }
.more { height: 18px; }
.more select { padding-left: 5px; }
.textlink { display: flex; justify-content: space-between; align-items: center; height: 29px; margin: 12px -8px 0; padding: 0 8px; border-top: 2px solid #ddd; border-bottom: 1px solid #ddd; }
.textlink button { width: 20px; height: 16px; background: #d8d8d8; border: 1px solid #bbb; }
.textlink button svg { opacity: .4; height: 6px; }
.iscroll .shapehead { height: 28px; }
.pickshape { display: flex; align-items: center; gap: 8px; font-size: 10px; }
.pickshape .drop { width: 31px; height: 18px; }
.iscroll h4 { font-size: 10px; height: 18px; line-height: 18px; margin-top: 7px; }
.istyle { display: flex; height: 17px; align-items: center; gap: 4px; padding-left: 2px; }
.outline { border-top: 2px solid #bcbcbc; }
.outline .tree li { gap: 5px; padding-left: 5px; }
.outline .tree .root { gap: 2px; }
.outline .tree .d1 { padding-left: 19px; gap: 6px; }
.outline .tree .d2 { padding-left: 44px; gap: 4px; }
.outline .tree .d0 { padding-left: 15px; gap: 4px; }

.taskbar { height: 7px; flex: none; overflow: hidden; background: linear-gradient(90deg, #1c3138, #1c3138 6%, #2d3334 7%, #2d2f2f 68%, #1c3138 85%); color: #fff; display: flex; justify-content: flex-end; padding: 3px 59px 0; }
.taskbar time { line-height: 10px; }

/* case editor */
.dialog { position: absolute; left: 338px; top: 200px; width: 781px; background: #f3f3f3; border: 1px solid #777; box-shadow: 2px 4px 14px rgba(0, 0, 0, .35); }
.dialog > header { height: 24px; background: #fff; display: flex; align-items: center; padding: 0 7px 0 6px; gap: 4px; }
.dialog > header h2 { flex: 1; font: 10px/14px "Open Sans", "Noto Sans CJK SC", sans-serif; color: #111; }
.caseform { display: flex; padding: 8px 8px 0; height: 26px; align-items: center; gap: 3px; }
.caseform label, .cols h3, .config h4, .opt { font-size: 10px; }
.caseform input { width: 239px; height: 18px; border: 1px solid #bbb; background: #fff; padding: 0 2px; }
.caseform button { width: 59px; height: 18px; border: 1px solid #bbb; margin-left: 9px; }
.cols { display: grid; grid-template-columns: 175px 255px minmax(0, 1fr); gap: 8px; padding: 6px 8px 0; }
.cols section { display: flex; flex-direction: column; }
.cols h3 { height: 22px; line-height: 22px; }
.box { background: #fff; border: 1px solid #bbb; height: 349px; overflow: hidden; }
.split { display: flex; }
.actions { flex: 1; display: grid; grid-auto-rows: 1fr; height: 352px; }
.actions li { display: flex; align-items: center; gap: 6px; padding-left: 20px; }
.actions .cat { padding-left: 5px; gap: 7px; }
.actions .leaf { padding-left: 33px; }
.cases li svg + svg { margin: 0 0 0 -3px; }
.cases .sub { padding-left: 31px; gap: 5px; }
.config { padding: 2px 4px 0 3px; display: flex; flex-direction: column; }
.config h4 { height: 17px; line-height: 15px; }
.find { display: flex; gap: 7px; height: 16px; align-items: center; margin-bottom: 3px; }
.find > input { flex: 1; min-width: 0; height: 16px; border: 1px solid #bbb; padding: 0 2px; font-style: italic; background: #fff; }
.find .check { gap: 3px; padding-right: 2px; }
.targets { border: 1px solid #bbb; flex: 1; }
.tree .c1, .tree .c2 { padding-left: 17px; }
.tree .c2 { padding-left: 31px; }
.targets .check { gap: 5px; }
.targets li svg { margin-right: -3px; }
.targets li { gap: 8px; }
.opt { display: flex; align-items: center; height: 18px; margin: 7px 0 0 3px; gap: 4px; color: #333; }
.opt .pick { height: 18px; }
.opt .pick select { background: #f0f0f0; padding-left: 5px; color: #111; }
.opt input { width: 40px; height: 18px; border: 1px solid #ccc; background: #f0f0f0; color: #999; padding: 0 2px; }
.opt .pick select:disabled { color: #999; border-color: #ccc; opacity: 1; }
.opt .ax, .opt .tm { margin-left: 3px; }
.opt .fx { color: #ccc; font-weight: bold; font-size: 11px; }
.opt.last { margin: 10px 0 8px 3px; }
.dialog > footer { display: flex; justify-content: flex-end; gap: 4px; padding: 8px 8px 5px; }
.dialog > footer button { width: 60px; height: 18px; border: 1px solid #888; border-radius: 2px; background: linear-gradient(#f4f4f4, #e8e8e8 50%, #d4d4d4); font-size: 10px; }
.dialog > footer .ok { border-color: #2f8fb4; box-shadow: inset 0 0 0 1px #6fd0ee; }

/* tutorial notes over the window */
.notes { position: absolute; inset: 0; pointer-events: none; overflow: hidden; }
.notes > svg { width: 100%; height: 100%; }
.notes p { position: absolute; white-space: nowrap; color: #fd3a3a; font: 21px/29px "Open Sans", "Noto Sans CJK SC", sans-serif; }
.notes .n1 { left: 231px; top: 217px; }
.notes .n2 { left: 1215px; top: 289px; }
.notes .n3 { left: 305px; top: 515px; }
.notes .n4 { left: 621px; top: 425px; }
.notes .n5 { left: 895px; top: 701px; }
.notes .n6 { left: 1153px; top: 465px; }
.notes .act { left: 1300px; top: 752px; font-size: 16px; line-height: 22px; color: #aaa; }
.act small { display: block; font-size: 12px; line-height: 16px; }
.notes .csdn { right: 9px; bottom: 8px; font: 16px/20px "Liberation Sans", sans-serif; color: #fff; text-shadow: 0 0 2px #999; opacity: .8; }
```
